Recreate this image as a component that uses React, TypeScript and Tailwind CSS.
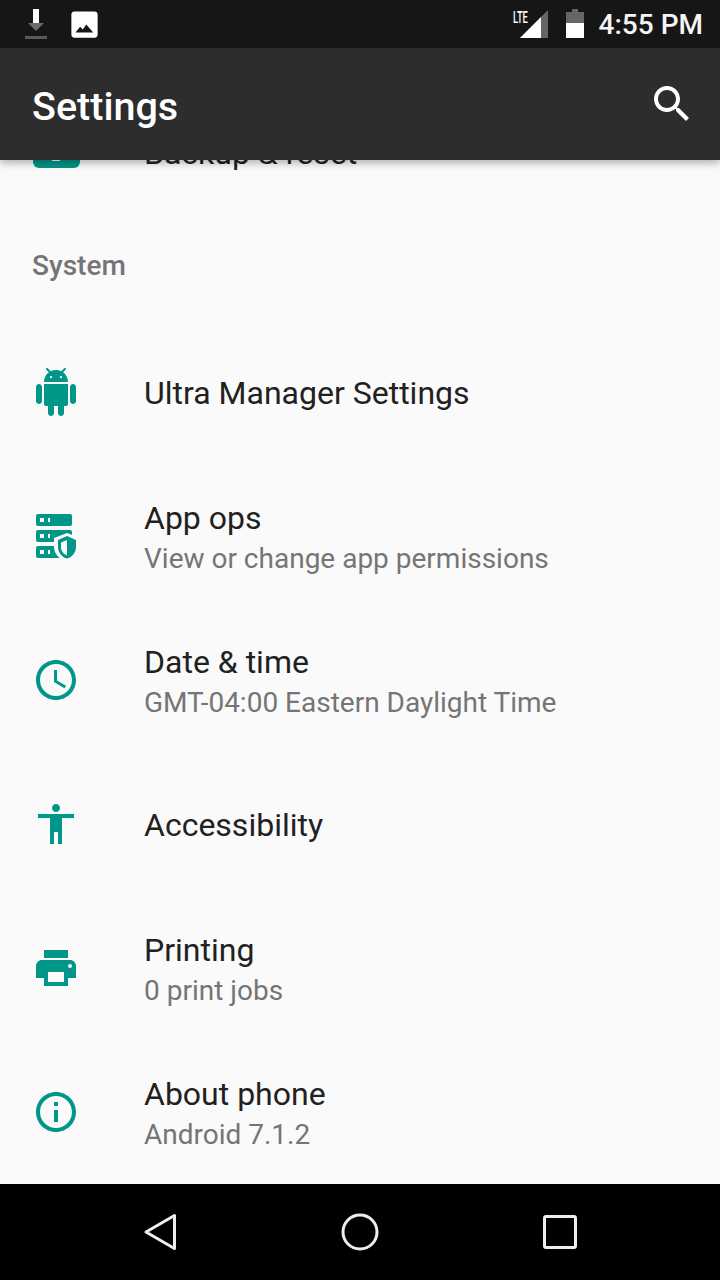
import React from "react";

const Teal = ({ d, className = "" }: { d: string; className?: string }) => (
  <svg viewBox="0 0 24 24" className={`w-12 h-12 shrink-0 ${className}`} fill="#009688" fillRule="evenodd">
    <path d={d} />
  </svg>
);

const ICONS = {
  android:
    "M6 18c0 .55.45 1 1 1h1v3.5c0 .83.67 1.5 1.5 1.5s1.5-.67 1.5-1.5V19h2v3.5c0 .83.67 1.5 1.5 1.5s1.5-.67 1.5-1.5V19h1c.55 0 1-.45 1-1V8H6v10zM3.5 8C2.67 8 2 8.67 2 9.5v7c0 .83.67 1.5 1.5 1.5S5 17.33 5 16.5v-7C5 8.67 4.33 8 3.5 8zm17 0c-.83 0-1.5.67-1.5 1.5v7c0 .83.67 1.5 1.5 1.5s1.5-.67 1.5-1.5v-7c0-.83-.67-1.5-1.5-1.5zm-4.97-5.84l1.3-1.3c.2-.2.2-.51 0-.71-.2-.2-.51-.2-.71 0l-1.48 1.48C13.85 1.23 12.95 1 12 1c-.96 0-1.86.23-2.66.63L7.85.15c-.2-.2-.51-.2-.71 0-.2.2-.2.51 0 .71l1.31 1.31C6.97 3.26 6 5.01 6 7h12c0-1.99-.97-3.75-2.47-4.84zM10 5H9V4h1v1zm5 0h-1V4h1v1z",
  clock:
    "M11.99 2C6.47 2 2 6.48 2 12s4.47 10 9.99 10C17.52 22 22 17.52 22 12S17.52 2 11.99 2zM12 20c-4.42 0-8-3.58-8-8s3.58-8 8-8 8 3.58 8 8-3.58 8-8 8zm.5-13H11v6l5.25 3.15.75-1.23-4.5-2.67z",
  access: "M12 2c1.1 0 2 .9 2 2s-.9 2-2 2-2-.9-2-2 .9-2 2-2zm9 7h-6v13h-2v-6h-2v6H9V9H3V7h18v2z",
  print:
    "M19 8H5c-1.66 0-3 1.34-3 3v6h4v4h12v-4h4v-6c0-1.66-1.34-3-3-3zm-3 11H8v-5h8v5zm3-7c-.55 0-1-.45-1-1s.45-1 1-1 1 .45 1 1-.45 1-1 1zm-1-9H6v4h12V3z",
  info:
    "M11 7h2v2h-2zm0 4h2v6h-2zm1-9C6.48 2 2 6.48 2 12s4.48 10 10 10 10-4.48 10-10S17.52 2 12 2zm0 18c-4.41 0-8-3.59-8-8s3.59-8 8-8 8 3.59 8 8-3.59 8-8 8z",
};

const AppOpsIcon = () => (
  <svg viewBox="0 0 24 24" className="w-12 h-12 shrink-0">
    <g fill="#009688">
      <rect x="2" y="1" width="18" height="6" rx="1" />
      <rect x="2" y="9" width="18" height="6" rx="1" />
      <rect x="2" y="17" width="18" height="6" rx="1" />
    </g>
    <g fill="#fafafa">
      <rect x="4" y="3" width="2" height="2" />
      <rect x="8" y="3" width="1" height="2" />
      <rect x="4" y="11" width="2" height="2" />
      <rect x="8" y="11" width="1" height="2" />
      <rect x="4" y="19" width="2" height="2" />
      <rect x="8" y="19" width="1" height="2" />
      <path d="M17.5 10.5 L24 13 V17.5 C24 21 21 24 17.5 25 C14 24 11 21 11 17.5 V13 Z" />
    </g>
    <path fill="#009688" fillRule="evenodd" d="M17.5 12 L22 14 V17.5 C22 20.2 20.1 22.6 17.5 23.3 C14.9 22.6 13 20.2 13 17.5 V14 Z M17.5 14 L14.5 15.2 V17.5 C14.5 19.4 15.7 21 17.5 21.7 Z" />
  </svg>
);

const BackupIcon = () => (
  <svg viewBox="0 0 24 24" className="w-12 h-12 shrink-0">
    <rect x="0.5" y="4" width="23.5" height="16" rx="3" fill="#009688" />
    <rect x="10" y="14" width="4" height="2.5" fill="#fafafa" />
  </svg>
);

const Row = ({ icon, title, sub }: { icon: React.ReactNode; title: string; sub?: string }) => (
  <div className="h-36 flex items-center pl-8">
    {icon}
    <div className={sub ? "ml-16 flex flex-col pt-[5px]" : "ml-16 flex flex-col pt-[2px]"}>
      <div className="text-[32px] leading-[40px] text-[#212121]">{title}</div>
      {sub && <div className="mt-px text-[28px] leading-[40px] text-[#757575]">{sub}</div>}
    </div>
  </div>
);

export default function App() {
  return (
    <div className="w-[720px] h-[1280px] flex flex-col bg-[#fafafa] overflow-hidden font-['Roboto',sans-serif]">
      <div className="h-12 shrink-0 bg-[#161616] flex items-center relative z-20">
        <svg width="22" height="30" viewBox="0 0 22 30" className="ml-[25px]">
          <rect x="8" y="0" width="6" height="14" fill="#ffffff" />
          <path d="M3 14 H19 L11 22 Z" fill="#6b6b6b" />
          <rect x="0" y="27" width="22" height="3" fill="#5a5a5a" />
        </svg>
        <svg viewBox="0 0 24 24" className="w-[35px] h-[35px] ml-[20px]" fill="#ffffff" fillRule="evenodd">
          <path d="M21 19V5c0-1.1-.9-2-2-2H5c-1.1 0-2 .9-2 2v14c0 1.1.9 2 2 2h14c1.1 0 2-.9 2-2zM5.8 17.5 L9 13.6 L10.8 15.4 L13.2 12 L18 17.5Z" />
        </svg>
        <div className="ml-auto flex items-center pr-[17px]">
          <div className="relative w-[36px] h-[30px] mr-[18px]">
            <svg width="36" height="30" viewBox="0 0 36 30" className="block">
              <path d="M36 1 V29 H8 Z" fill="#666666" />
              <path d="M29 8 V29 H8 Z" fill="#ffffff" />
            </svg>
            <span className="absolute left-[1px] top-0 block origin-left scale-x-[.55] text-[17px] leading-[16px] font-medium text-white">LTE</span>
          </div>
          <svg width="18" height="30" viewBox="0 0 18 30" className="mr-[15px]">
            <path d="M6 0 H12 V3 H18 V29 H0 V3 H6 Z" fill="#666666" />
            <rect x="0" y="14" width="18" height="15" fill="#ffffff" />
          </svg>
          <span className="mt-[2px] text-[28px] leading-none font-medium text-[#f5f5f5]">4:55 PM</span>
        </div>
      </div>

      <div className="h-28 shrink-0 bg-[#2d2d2d] flex items-center justify-between pl-8 pr-6 relative z-10 shadow-[0_3px_8px_rgba(0,0,0,0.3)]">
        <span className="mt-[6px] text-[39.5px] font-medium text-white leading-none">Settings</span>
        <svg viewBox="0 0 24 24" className="w-12 h-12" fill="#ffffff">
          <path d="M15.5 14h-.79l-.28-.27C15.41 12.59 16 11.11 16 9.5 16 5.91 13.09 3 9.5 3S3 5.91 3 9.5 5.91 16 9.5 16c1.61 0 3.09-.59 4.23-1.57l.27.28v.79l5 4.99L20.49 19l-4.99-5zm-6 0C7.01 14 5 11.99 5 9.5S7.01 5 9.5 5 14 7.01 14 9.5 11.99 14 9.5 14z" />
        </svg>
      </div>

      <div className="flex-1 overflow-hidden">
        <div className="-mt-20">
          <Row icon={<BackupIcon />} title="Backup & reset" />
          <div className="h-24 pl-8 pt-6 text-[28px] leading-[36px] font-medium text-[#757575]">System</div>
          <Row icon={<Teal d={ICONS.android} />} title="Ultra Manager Settings" />
          <Row icon={<AppOpsIcon />} title="App ops" sub="View or change app permissions" />
          <Row icon={<Teal d={ICONS.clock} />} title="Date & time" sub="GMT-04:00 Eastern Daylight Time" />
          <Row icon={<Teal d={ICONS.access} />} title="Accessibility" />
          <Row icon={<Teal d={ICONS.print} />} title="Printing" sub="0 print jobs" />
          <Row icon={<Teal d={ICONS.info} />} title="About phone" sub="Android 7.1.2" />
        </div>
      </div>

      <div className="h-24 shrink-0 bg-black flex items-center justify-between px-[143px]">
        <svg width="34" height="38" viewBox="0 0 34 38">
          <path d="M31.5 2.5 V35.5 L3 19 Z" fill="none" stroke="#eeeeee" strokeWidth="3" strokeLinejoin="round" />
        </svg>
        <svg width="38" height="38" viewBox="0 0 38 38">
          <circle cx="19" cy="19" r="17" fill="none" stroke="#eeeeee" strokeWidth="3" />
        </svg>
        <svg width="34" height="34" viewBox="0 0 34 34">
          <rect x="1.5" y="1.5" width="31" height="31" rx="1.5" fill="none" stroke="#eeeeee" strokeWidth="3" />
        </svg>
      </div>
    </div>
  );
}
